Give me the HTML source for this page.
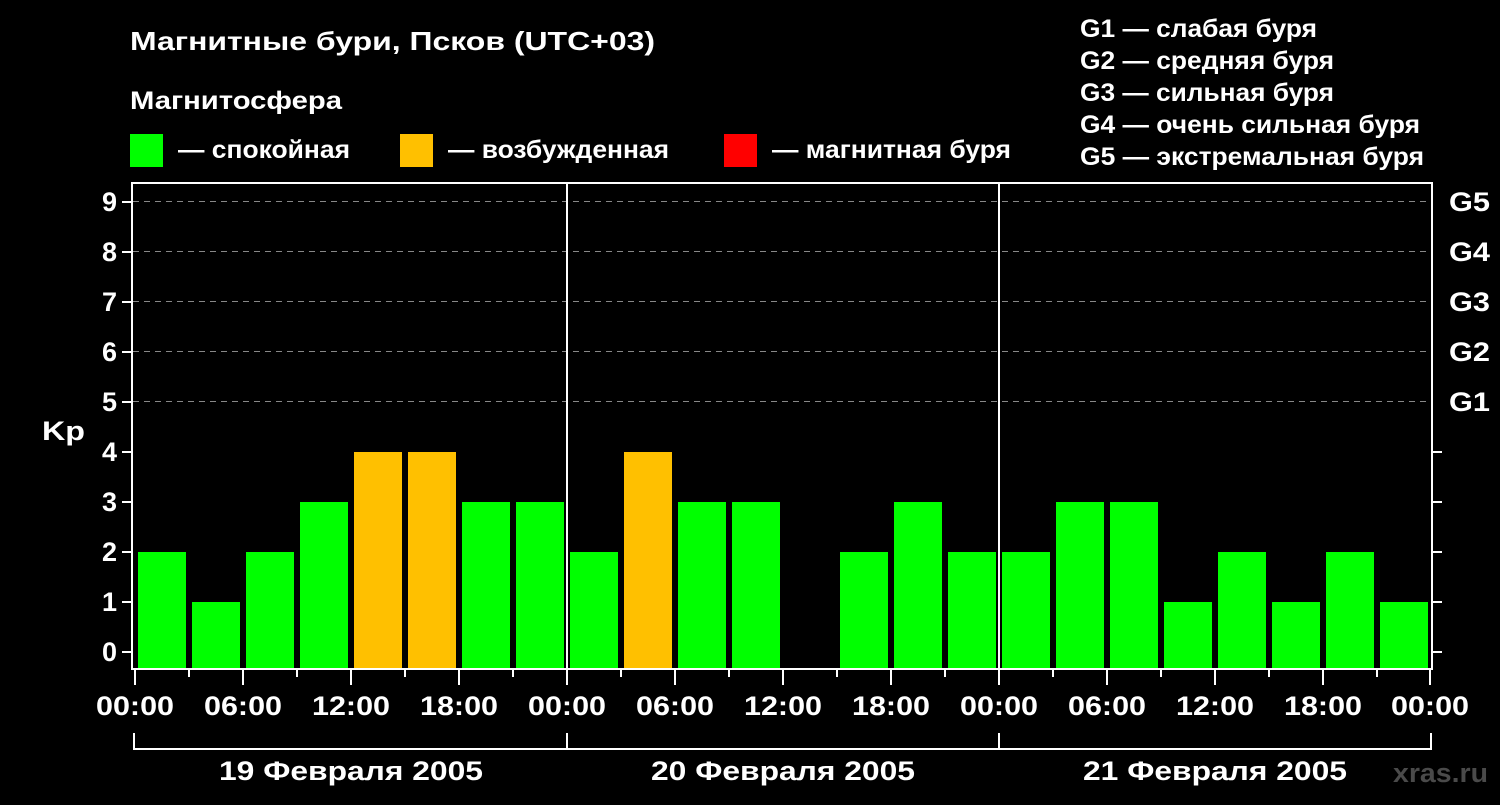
<!DOCTYPE html><html><head><meta charset="utf-8"><style>
body{margin:0;background:#000;width:1500px;height:800px;overflow:hidden}
svg text{font-family:"Liberation Sans",sans-serif;font-weight:bold;fill:#fff}
</style></head><body>
<svg width="1500" height="800" xmlns="http://www.w3.org/2000/svg">
<text x="130" y="50" font-size="26" textLength="525" lengthAdjust="spacingAndGlyphs">Магнитные бури, Псков (UTC+03)</text>
<text x="130" y="109" font-size="25" textLength="212" lengthAdjust="spacingAndGlyphs">Магнитосфера</text>
<rect x="130" y="134" width="33" height="33" fill="#00ff00"/>
<text x="178" y="158" font-size="25" textLength="172" lengthAdjust="spacingAndGlyphs">— спокойная</text>
<rect x="400" y="134" width="33" height="33" fill="#ffc000"/>
<text x="448" y="158" font-size="25" textLength="221" lengthAdjust="spacingAndGlyphs">— возбужденная</text>
<rect x="724" y="134" width="33" height="33" fill="#ff0000"/>
<text x="772" y="158" font-size="25" textLength="239" lengthAdjust="spacingAndGlyphs">— магнитная буря</text>
<g font-size="25">
<text x="1080" y="37" textLength="237" lengthAdjust="spacingAndGlyphs">G1 — слабая буря</text>
<text x="1080" y="69" textLength="254" lengthAdjust="spacingAndGlyphs">G2 — средняя буря</text>
<text x="1080" y="101" textLength="254" lengthAdjust="spacingAndGlyphs">G3 — сильная буря</text>
<text x="1080" y="133" textLength="340" lengthAdjust="spacingAndGlyphs">G4 — очень сильная буря</text>
<text x="1080" y="165" textLength="344" lengthAdjust="spacingAndGlyphs">G5 — экстремальная буря</text>
</g>
<g stroke="#888" stroke-width="1" stroke-dasharray="6,5">
<line x1="133" y1="201.5" x2="1432" y2="201.5"/><line x1="133" y1="251.5" x2="1432" y2="251.5"/><line x1="133" y1="301.5" x2="1432" y2="301.5"/><line x1="133" y1="351.5" x2="1432" y2="351.5"/><line x1="133" y1="401.5" x2="1432" y2="401.5"/>
</g>
<g id="bars"></g>
<g stroke="#fff" stroke-width="2" fill="none">
<rect x="132" y="183" width="1300" height="486"/>
<line x1="567" y1="183" x2="567" y2="669"/><line x1="999" y1="183" x2="999" y2="669"/>
<path d="M134 733V749H1431V733M567 733V749M999 733V749"/>
</g>
<g id="ticks" stroke="#fff" stroke-width="2"></g>
<g font-size="27" text-anchor="end">
<text x="117" y="661">0</text><text x="117" y="611">1</text><text x="117" y="561">2</text><text x="117" y="511">3</text><text x="117" y="461">4</text><text x="117" y="411">5</text><text x="117" y="361">6</text><text x="117" y="311">7</text><text x="117" y="261">8</text><text x="117" y="211">9</text>
</g>
<g font-size="27">
<text x="1449" y="411" textLength="41" lengthAdjust="spacingAndGlyphs">G1</text><text x="1449" y="361" textLength="41" lengthAdjust="spacingAndGlyphs">G2</text><text x="1449" y="311" textLength="41" lengthAdjust="spacingAndGlyphs">G3</text><text x="1449" y="261" textLength="41" lengthAdjust="spacingAndGlyphs">G4</text><text x="1449" y="211" textLength="41" lengthAdjust="spacingAndGlyphs">G5</text>
</g>
<text x="42" y="440" font-size="27" textLength="43" lengthAdjust="spacingAndGlyphs">Kp</text>
<g font-size="27" id="tl"></g>
<g font-size="27">
<text x="219" y="780" textLength="264" lengthAdjust="spacingAndGlyphs">19 Февраля 2005</text><text x="651" y="780" textLength="264" lengthAdjust="spacingAndGlyphs">20 Февраля 2005</text><text x="1083" y="780" textLength="264" lengthAdjust="spacingAndGlyphs">21 Февраля 2005</text>
</g>
<text x="1393" y="782" font-size="27" textLength="95" lengthAdjust="spacingAndGlyphs" style="fill:#4a4a4a">xras.ru</text>
</svg>
<script>
var v=[2,1,2,3,4,4,3,3,2,4,3,3,0,2,3,2,2,3,3,1,2,1,2,1],ns="http://www.w3.org/2000/svg";
var b=document.getElementById('bars'),t=document.getElementById('ticks'),tl=document.getElementById('tl');
v.forEach(function(k,i){if(!k)return;var r=document.createElementNS(ns,'rect');var top=652-50*k;
r.setAttribute('x',138+54*i);r.setAttribute('width',48);r.setAttribute('y',top);r.setAttribute('height',668-top);
r.setAttribute('fill',k>=4?'#ffc000':'#00ff00');b.appendChild(r);});
function ln(x1,y1,x2,y2){var l=document.createElementNS(ns,'line');l.setAttribute('x1',x1);l.setAttribute('y1',y1);l.setAttribute('x2',x2);l.setAttribute('y2',y2);t.appendChild(l);}
for(var k=0;k<10;k++){ln(122,652-50*k,132,652-50*k);}
for(var k=0;k<5;k++){ln(1432,652-50*k,1442,652-50*k);}
var lab=['00:00','06:00','12:00','18:00'];
for(var i=0;i<=24;i++){var x=(i==24?1430:135+54*i);ln(x,670,x,i%2?677:685);
if(i%2==0){var tx=document.createElementNS(ns,'text');tx.setAttribute('x',x-39);tx.setAttribute('y',715);tx.setAttribute('textLength',78);tx.setAttribute('lengthAdjust','spacingAndGlyphs');tx.textContent=lab[(i/2)%4];tl.appendChild(tx);}}
</script>
</body></html>
